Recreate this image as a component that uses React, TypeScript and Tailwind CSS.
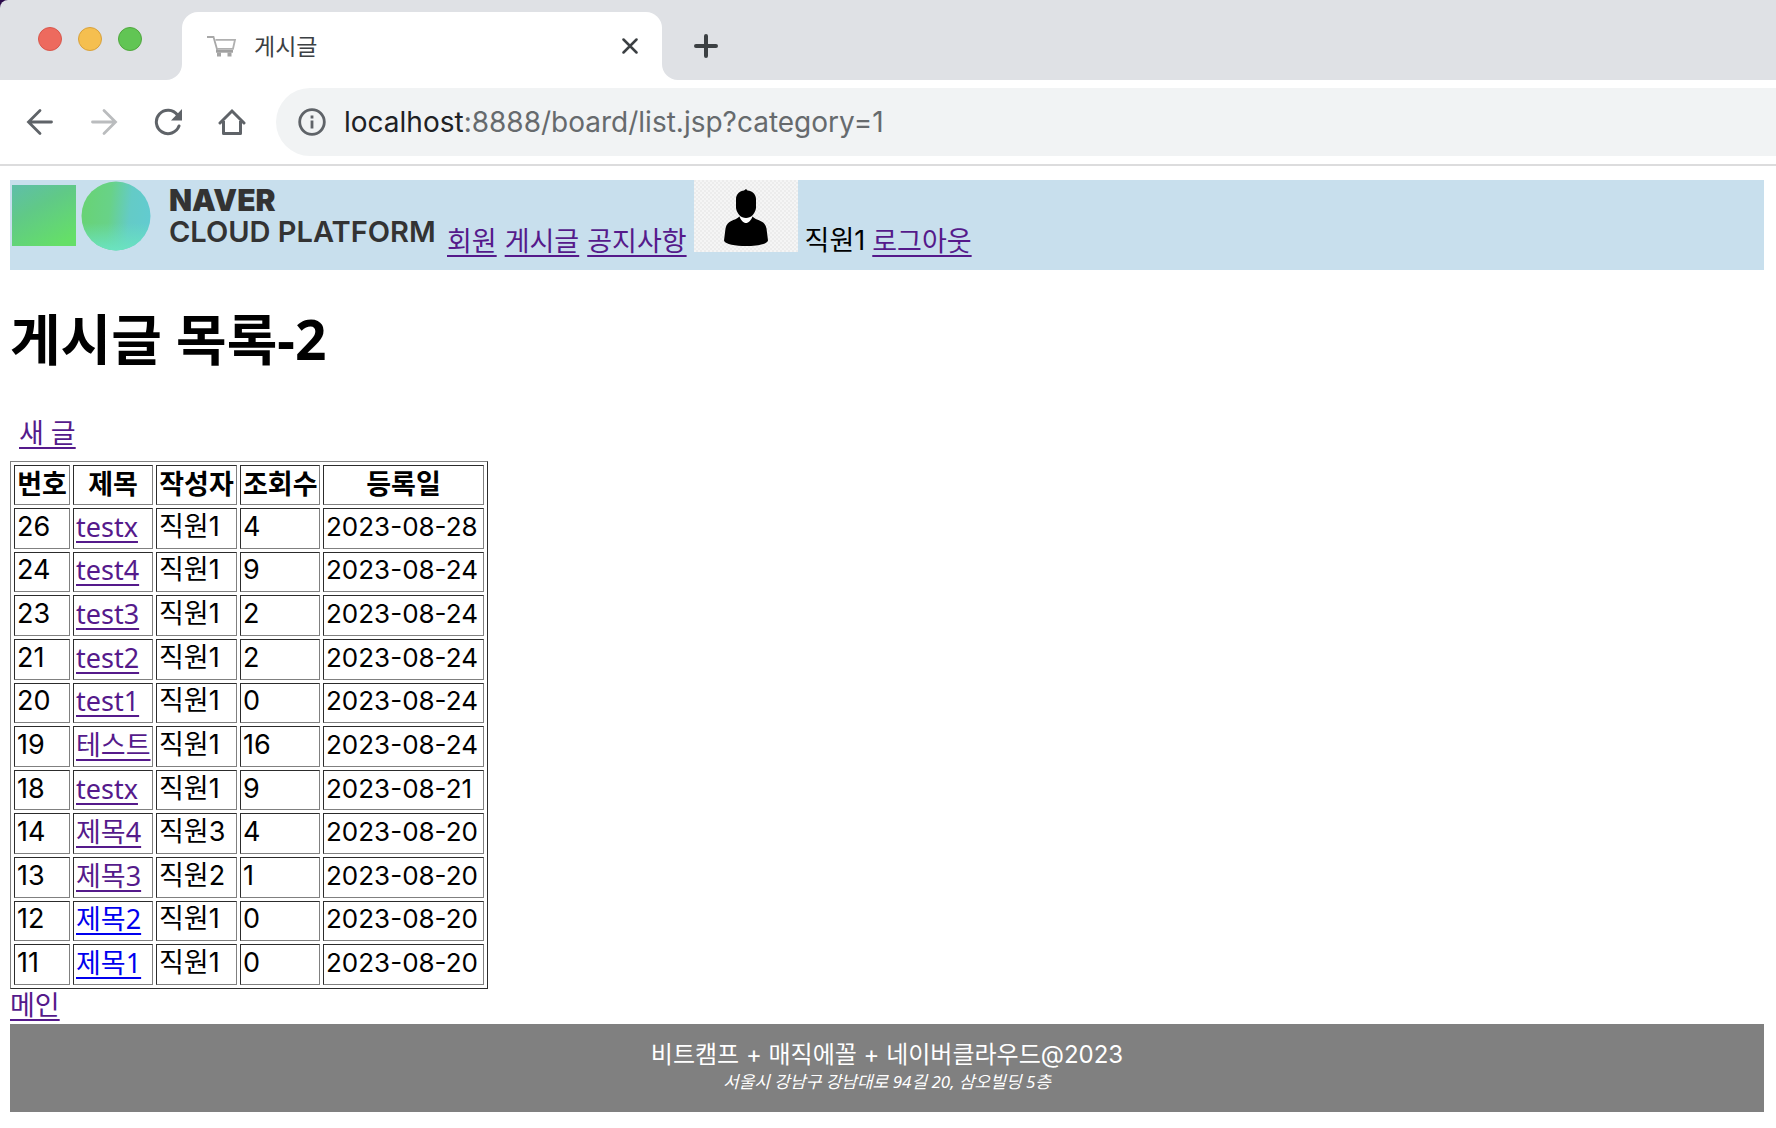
import clsx from 'clsx'

type Post = {
  no: number
  title: string
  writer: string
  views: number
  date: string
  visited: boolean
}

const posts: Post[] = [
  { no: 26, title: 'testx', writer: '직원1', views: 4, date: '2023-08-28', visited: true },
  { no: 24, title: 'test4', writer: '직원1', views: 9, date: '2023-08-24', visited: true },
  { no: 23, title: 'test3', writer: '직원1', views: 2, date: '2023-08-24', visited: true },
  { no: 21, title: 'test2', writer: '직원1', views: 2, date: '2023-08-24', visited: true },
  { no: 20, title: 'test1', writer: '직원1', views: 0, date: '2023-08-24', visited: true },
  { no: 19, title: '테스트', writer: '직원1', views: 16, date: '2023-08-24', visited: true },
  { no: 18, title: 'testx', writer: '직원1', views: 9, date: '2023-08-21', visited: true },
  { no: 14, title: '제목4', writer: '직원3', views: 4, date: '2023-08-20', visited: true },
  { no: 13, title: '제목3', writer: '직원2', views: 1, date: '2023-08-20', visited: true },
  { no: 12, title: '제목2', writer: '직원1', views: 0, date: '2023-08-20', visited: false },
  { no: 11, title: '제목1', writer: '직원1', views: 0, date: '2023-08-20', visited: false },
]

const columns = [
  { label: '번호', width: 'w-[56px]' },
  { label: '제목', width: 'w-[80px]' },
  { label: '작성자', width: 'w-[81px]' },
  { label: '조회수', width: 'w-[80px]' },
  { label: '등록일', width: 'w-[161px]' },
]

const link = 'underline decoration-2 underline-offset-4 [text-decoration-skip-ink:none]'
const numeric = "font-['Inter','Noto_Sans_CJK_KR',sans-serif]"
const cell =
  'border border-t-[#2c2c2c] border-l-[#2c2c2c] border-r-[#808080] border-b-[#808080] px-[2px] pb-[3px] align-middle leading-8 whitespace-nowrap'

function TabStrip() {
  return (
    <div className="flex h-20 items-end rounded-tl-lg bg-[#dfe1e5]">
      <div className="flex w-[166px] gap-4 self-start pt-[27px] pl-[38px]">
        <button aria-label="닫기" className="size-6 rounded-full border border-[#d8574c] bg-[#ed6a5e]" />
        <button aria-label="최소화" className="size-6 rounded-full border border-[#d8a13c] bg-[#f5bf4f]" />
        <button aria-label="최대화" className="size-6 rounded-full border border-[#50a73e] bg-[#61c554]" />
      </div>
      <svg className="size-4" viewBox="0 0 16 16" fill="#fff">
        <path d="M16 0v16H0A16 16 0 0 0 16 0z" />
      </svg>
      <div className="flex h-[68px] w-[480px] items-center rounded-t-2xl bg-white pr-6 pl-[25px]">
        <svg className="h-[22px] w-[30px]" viewBox="0 0 30 22" fill="none" stroke="#a8a8a8" strokeWidth="1.800">
          <path d="M0 2h6.500l4 14" />
          <path d="M8.500 4.800h19.500l-2 9H10" stroke="#b0b0b0" />
          <path d="M9 16.300h17" stroke="#a0a0a0" strokeWidth="2.800" />
          <path d="M10 19.500h4M20.500 19.500h4" strokeWidth="4" stroke="#a4a4a4" />
        </svg>
        <span className="ml-[17px] flex-1 text-[23px] text-[#3c4043]">게시글</span>
        <button aria-label="탭 닫기">
          <svg className="size-4" viewBox="0 0 16 16" stroke="#3c4043" strokeWidth="2.500" strokeLinecap="round">
            <path d="M1.500 1.500l13 13M14.500 1.500l-13 13" />
          </svg>
        </button>
      </div>
      <svg className="size-4" viewBox="0 0 16 16" fill="#fff">
        <path d="M0 0v16h16A16 16 0 0 1 0 0z" />
      </svg>
      <button aria-label="새 탭" className="mb-[22px] ml-4">
        <svg className="size-6" viewBox="0 0 24 24" stroke="#3c4043" strokeWidth="4" strokeLinecap="round">
          <path d="M12 2v20M2 12h20" />
        </svg>
      </button>
    </div>
  )
}

function Toolbar() {
  return (
    <div className="flex h-[86px] items-center border-b-2 border-[#dcdcdd] pl-[26px]">
      <div className="flex w-[250px] gap-9">
        <button aria-label="뒤로">
          <svg className="size-7" viewBox="0 0 28 28" fill="none" stroke="#5f6368" strokeWidth="2.800" strokeLinecap="round">
            <path d="M25.500 14H3M14 2.500L2.500 14 14 25.500" />
          </svg>
        </button>
        <button aria-label="앞으로">
          <svg className="size-7" viewBox="0 0 28 28" fill="none" stroke="#babcbe" strokeWidth="2.800" strokeLinecap="round">
            <path d="M2.500 14H25M14 2.500L25.500 14 14 25.500" />
          </svg>
        </button>
        <button aria-label="새로고침">
          <svg className="size-7" viewBox="0 0 28 28" fill="none" stroke="#5f6368" strokeWidth="3">
            <path d="M23.500 7A11.700 11.700 0 1 0 25 18" strokeLinecap="round" />
            <path d="M28 1v11.500H17z" fill="#5f6368" stroke="none" />
          </svg>
        </button>
        <button aria-label="홈">
          <svg className="size-7" viewBox="0 0 28 28" fill="none" stroke="#5f6368" strokeWidth="3">
            <path d="M2 15L14 3l12 12" strokeLinecap="round" />
            <path d="M5.500 13v12.500h17V13" strokeLinejoin="round" />
          </svg>
        </button>
      </div>
      <div className="flex h-[68px] flex-1 items-center rounded-l-full bg-[#f1f3f4] pl-[22px]">
        <svg className="size-7" viewBox="0 0 28 28" fill="none" stroke="#5f6368" strokeWidth="2.800">
          <circle cx="14" cy="14" r="12.300" />
          <path d="M14 12.500v8M14 7.500v3" />
        </svg>
        <p className="ml-[18px] font-[Inter] text-[28px] text-[#666a6d]">
          <span className="text-[#202124]">localhost</span>:8888/board/list.jsp?category=1
        </p>
      </div>
    </div>
  )
}

function Logo() {
  return (
    <div className="flex h-[72px] w-[430px] gap-[17px]">
      <svg className="h-[72px] w-[142px]" viewBox="0 0 142 72">
        <defs>
          <linearGradient id="square" x1="0.100" y1="0" x2="0.700" y2="1">
            <stop offset="0" stopColor="#5fbfa6" />
            <stop offset="0.400" stopColor="#60c987" />
            <stop offset="1" stopColor="#65df68" />
          </linearGradient>
          <linearGradient id="circle" x1="0" y1="0.400" x2="1" y2="0.500">
            <stop offset="0" stopColor="#68d374" />
            <stop offset="0.400" stopColor="#68d288" />
            <stop offset="0.700" stopColor="#64cbc6" />
            <stop offset="1" stopColor="#62cbd0" />
          </linearGradient>
          <linearGradient id="glow" x1="0" y1="0" x2="0" y2="1">
            <stop offset="0.600" stopColor="#6be3c0" stopOpacity="0" />
            <stop offset="1" stopColor="#6be3c0" />
          </linearGradient>
        </defs>
        <rect x="2" y="5" width="64" height="61" fill="url(#square)" />
        <circle cx="106" cy="36" r="34.500" fill="url(#circle)" />
        <circle cx="106" cy="36" r="34.500" fill="url(#glow)" />
      </svg>
      <div className="pt-1 font-[Inter] text-[29px] leading-8 whitespace-nowrap text-[#333]">
        <p className="text-[30px] font-black">NAVER</p>
        <p className="font-semibold">CLOUD PLATFORM</p>
      </div>
    </div>
  )
}

function Avatar() {
  return (
    <svg className="h-[72px] w-[104px]" viewBox="0 0 104 72">
      <defs>
        <pattern id="checker" width="4" height="4" patternUnits="userSpaceOnUse">
          <rect width="4" height="4" fill="#f5f5f5" />
          <path d="M0 0h2v2H0zM2 2h2v2H2z" fill="#ececec" />
        </pattern>
      </defs>
      <rect width="104" height="72" fill="url(#checker)" />
      <path d="M45 38l7-3 8 3-3 5h-9z" fill="#fff" />
      <path d="M42 19c0-5 4-8 8-8.500l2-1.500 1.500 1.500C58 11 62 14 62 19v9c-1 6-5 10-10 10s-9-4-10-10z" />
      <path d="M45.500 36.500c1.500 4 4 6.500 6.500 6.500s5-2.500 6.500-6.500c5 5 12 3 14 12l1.500 12c-1 4-12 5.500-22 5.500s-21-1.500-22-5.500l1.500-12c2-9 9-7 14-12z" />
    </svg>
  )
}

export default function App() {
  return (
    <div className="bg-[#2b0a4a] font-['Noto_Sans','Noto_Sans_CJK_KR',sans-serif] text-[27px] leading-9 text-black">
      <TabStrip />
      <div className="bg-white">
        <Toolbar />
        <div className="pt-[14px] pr-3 pb-4 pl-[10px]">
          <header className="flex h-[90px] gap-[7px] bg-[#c8dfed]">
            <Logo />
            <nav className="flex gap-2 pt-[43px] text-[#551a8b]">
              <a href="#" className={link}>회원</a>
              <a href="#" className={link}>게시글</a>
              <a href="#" className={link}>공지사항</a>
            </nav>
            <Avatar />
            <span className={clsx(numeric, 'pt-[43px]')}>직원1</span>
            <a href="#" className={clsx(link, 'pt-[43px] text-[#551a8b]')}>로그아웃</a>
          </header>

          <h1 className="mt-[35px] text-[55px] leading-[68px] font-bold">게시글 목록-2</h1>

          <div className="mt-[42px] mb-[10px] pl-[9px]">
            <a href="#" className={clsx(link, 'text-[#551a8b]')}>새 글</a>
          </div>

          <table className="h-[528px] w-[478px] table-fixed border-separate border-spacing-[3px] border border-t-[#808080] border-r-[#2c2c2c] border-b-[#2c2c2c] border-l-[#808080]">
            <thead>
              <tr className="h-10">
                {columns.map((column) => (
                  <th key={column.label} className={clsx(cell, column.width, 'text-center font-bold')}>
                    {column.label}
                  </th>
                ))}
              </tr>
            </thead>
            <tbody>
              {posts.map((post) => (
                <tr key={post.no}>
                  <td className={clsx(cell, numeric)}>{post.no}</td>
                  <td className={cell}>
                    <a href="#" className={clsx(link, post.visited ? 'text-[#551a8b]' : 'text-[#0000ee]')}>
                      {post.title}
                    </a>
                  </td>
                  <td className={clsx(cell, numeric)}>{post.writer}</td>
                  <td className={clsx(cell, numeric)}>{post.views}</td>
                  <td className={clsx(cell, numeric, 'text-[26px]')}>{post.date}</td>
                </tr>
              ))}
            </tbody>
          </table>

          <a href="#" className={clsx(link, 'mb-1 block w-fit leading-[31px] text-[#551a8b]')}>메인</a>

          <footer className="h-[88px] bg-[#808080] pt-[15px] text-center text-white">
            <p className={clsx(numeric, 'text-2xl leading-8')}>비트캠프 + 매직에꼴 + 네이버클라우드@2023</p>
            <address className="text-[17px] leading-[22px] italic">서울시 강남구 강남대로 94길 20, 삼오빌딩 5층</address>
          </footer>
        </div>
      </div>
    </div>
  )
}
